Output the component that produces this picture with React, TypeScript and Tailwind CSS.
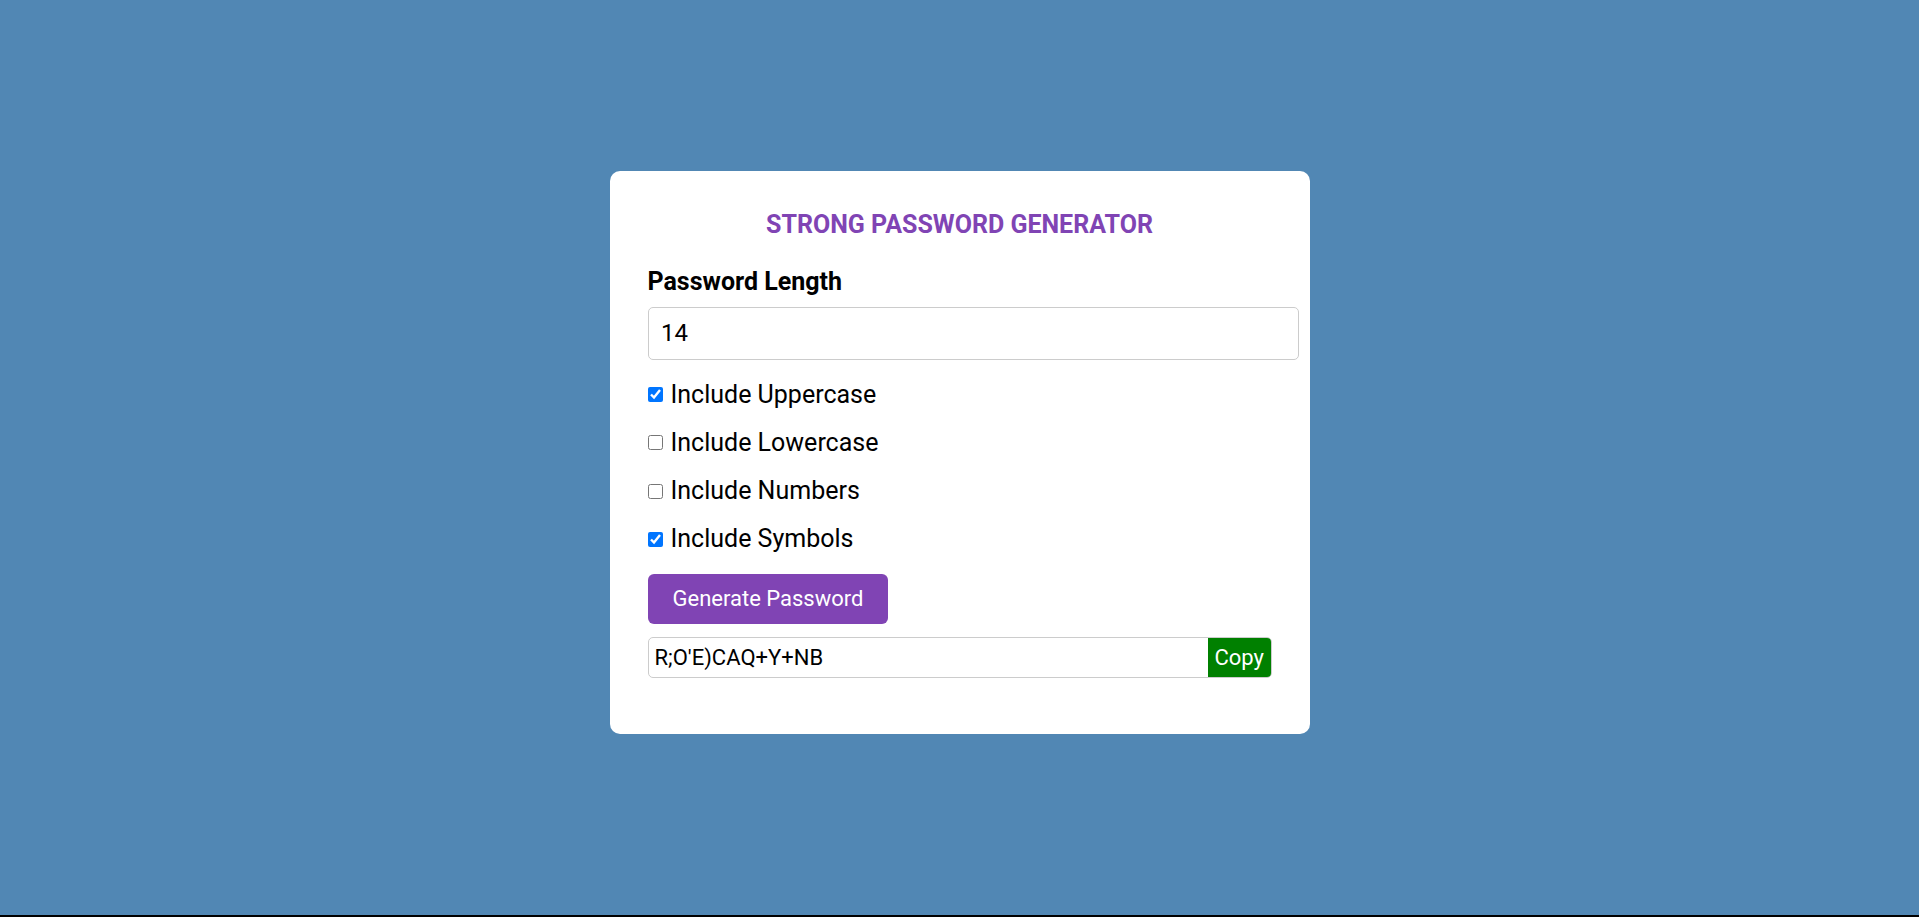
import { useState } from "react";

const options = [
  { key: "upper", label: "Include Uppercase" },
  { key: "lower", label: "Include Lowercase" },
  { key: "numbers", label: "Include Numbers" },
  { key: "symbols", label: "Include Symbols" },
];

export default function App() {
  const [length, setLength] = useState("14");
  const [checked, setChecked] = useState<Record<string, boolean>>({
    upper: true,
    lower: false,
    numbers: false,
    symbols: true,
  });
  const [password] = useState("R;O'E)CAQ+Y+NB");

  return (
    <div className="flex flex-col min-h-[917px] bg-[#5187b4] font-['Roboto',sans-serif]">
      <div className="flex-1 flex items-center justify-center pb-[10px]">
        {/* Card */}
        <div className="w-[700px] bg-white rounded-[10px] px-[38px] pt-[40px] pb-[56px]">
          <h2 className="text-center text-[25px] leading-[28px] font-bold text-[#8044b4]">
            STRONG PASSWORD GENERATOR
          </h2>

          <label className="block mt-[27.5px] text-[25px] leading-[30px] font-bold text-black">
            Password Length
          </label>
          <input
            type="number"
            value={length}
            onChange={(e) => setLength(e.target.value)}
            className="box-content block w-full mt-[10px] h-[25px] py-[13px] px-[12.5px] border border-[#ccc] rounded-[5px] text-[24px] leading-[25px] text-black outline-none"
          />

          {/* Options */}
          <div className="mt-[10.5px] flex flex-col">
            {options.map((o) => (
              <label key={o.key} className="h-[48.33px] flex items-center gap-[8px] text-[25px] leading-[30px] text-black">
                <input
                  type="checkbox"
                  checked={checked[o.key]}
                  onChange={() => setChecked({ ...checked, [o.key]: !checked[o.key] })}
                  className="w-[15px] h-[15px] m-0"
                />
                <span>{o.label}</span>
              </label>
            ))}
          </div>

          <button className="mt-[10px] px-[25px] py-[12px] bg-[#8044b4] text-white text-[22px] leading-[26px] rounded-[6px]">
            Generate Password
          </button>

          {/* Result */}
          <div className="mt-[13px] flex h-[41px] border border-[#ccc] rounded-[5px] overflow-hidden">
            <input
              type="text"
              readOnly
              value={password}
              className="flex-1 min-w-0 px-[6px] text-[22px] text-black outline-none"
            />
            <button className="px-[6.5px] bg-[#008000] text-white text-[22px]">Copy</button>
          </div>
        </div>
      </div>
      <div className="h-[2px] bg-black" />
    </div>
  );
}
